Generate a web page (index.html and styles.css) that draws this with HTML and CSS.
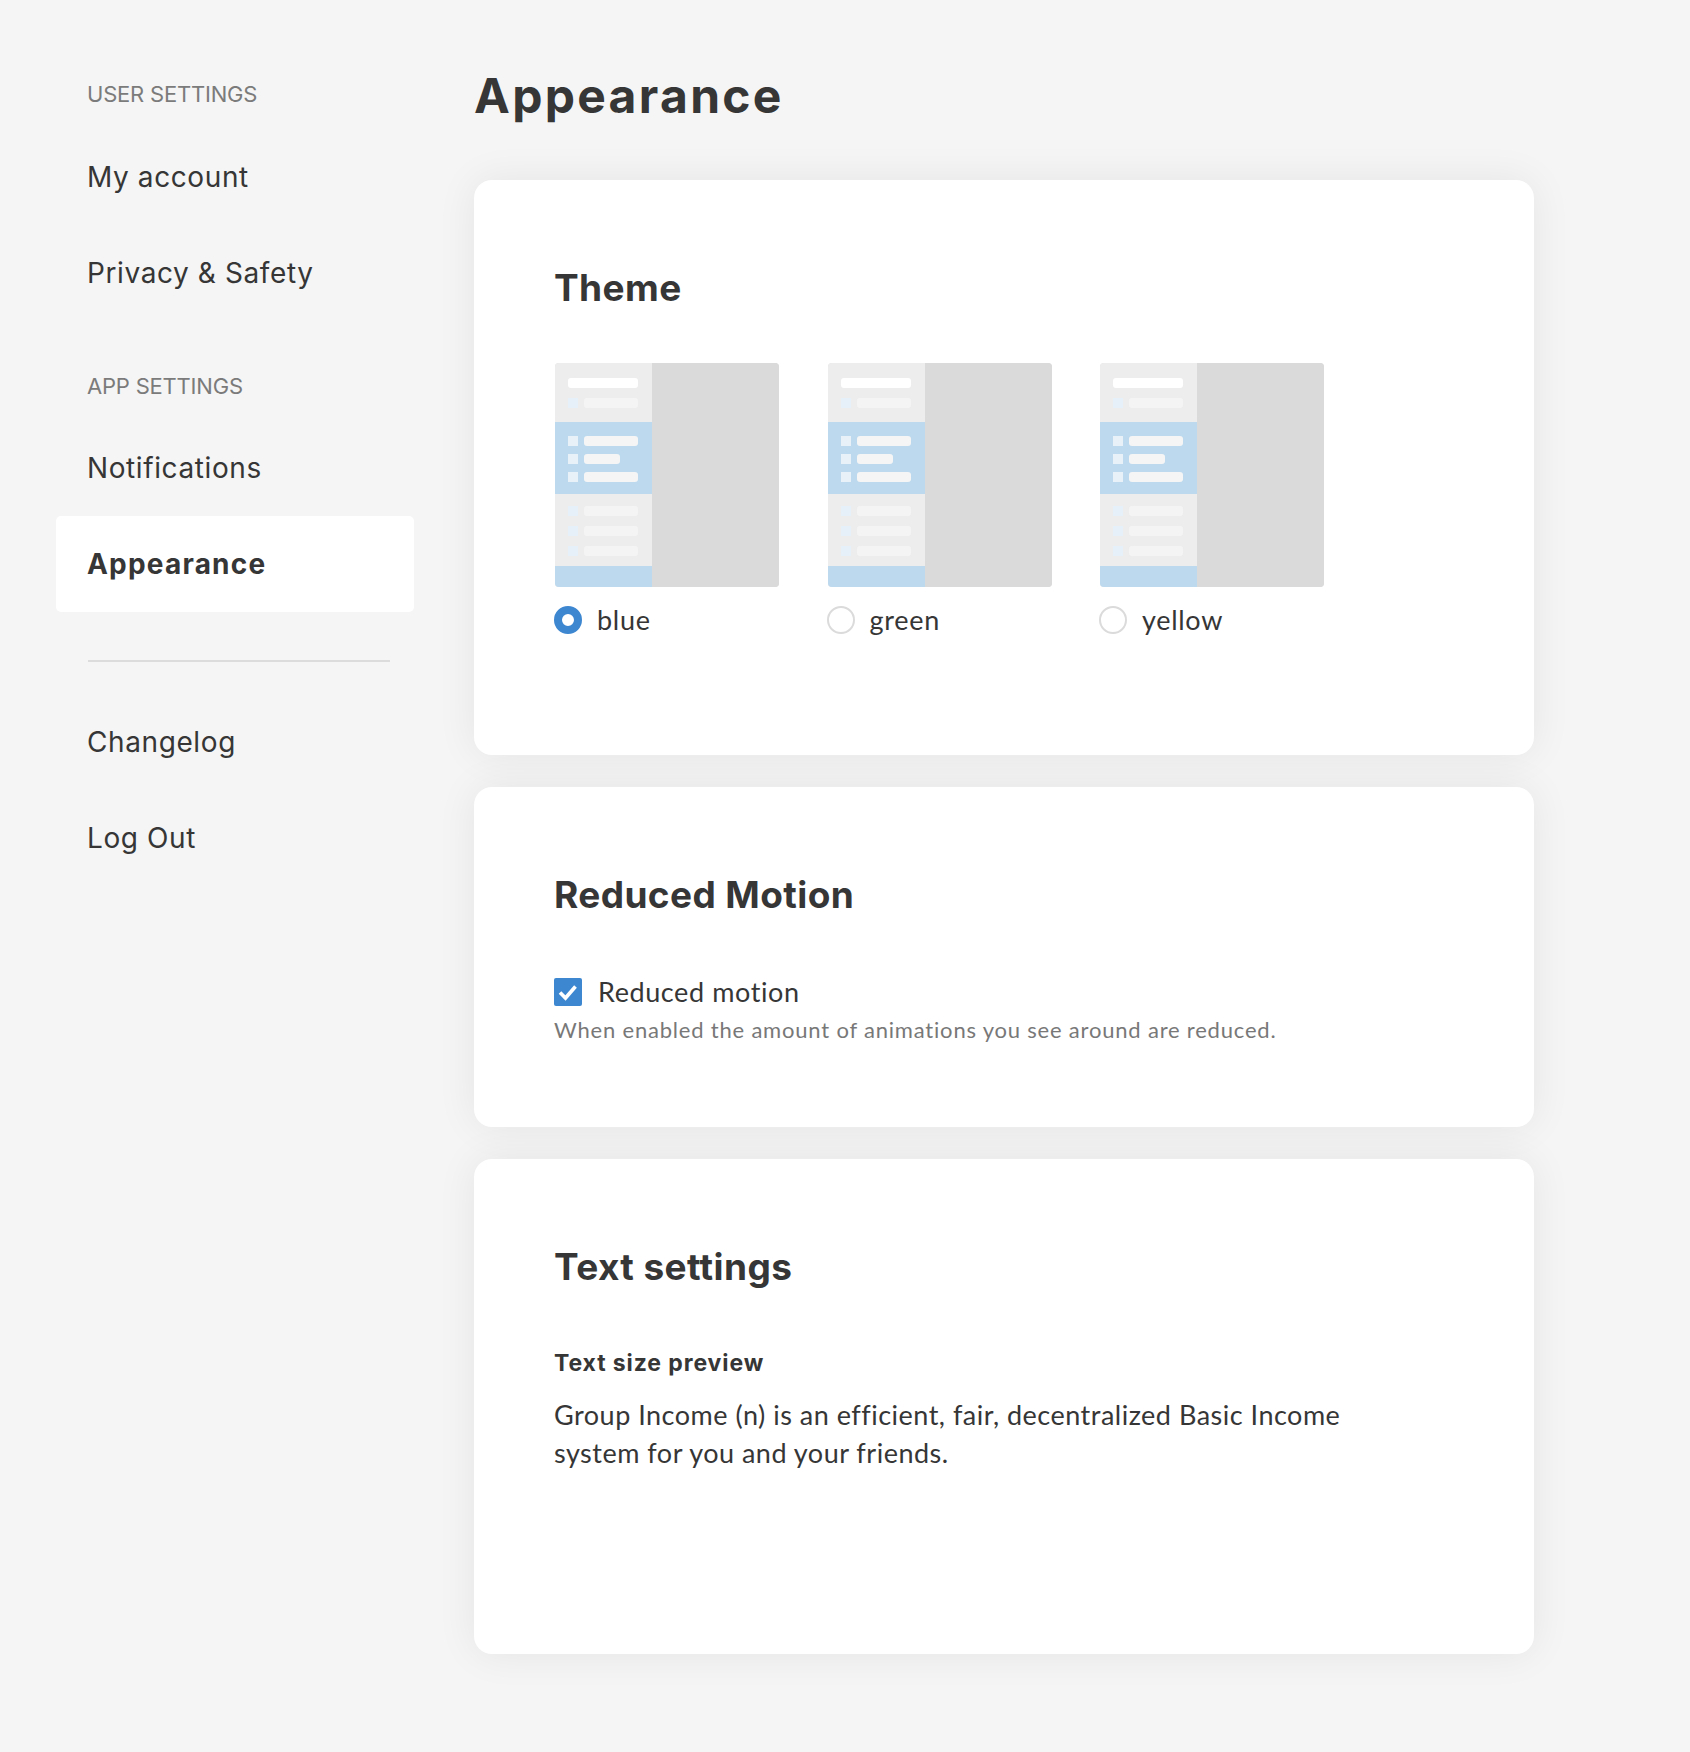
FILE: index.html
```html
<!DOCTYPE html>
<html lang="en">
<head>
    <meta charset="UTF-8">
    <meta name="viewport" content="width=device-width, initial-scale=1.0">
    <title>Appearance - Settings</title>
    <link rel="stylesheet" href="styles.css">
</head>
<body>
    <div class="page">
        <nav class="sidebar">
            <h4 class="nav-label">USER SETTINGS</h4>
            <a class="nav-item" href="#">My account</a>
            <a class="nav-item" href="#">Privacy &amp; Safety</a>

            <h4 class="nav-label nav-label-next">APP SETTINGS</h4>
            <a class="nav-item" href="#">Notifications</a>
            <a class="nav-item active" href="#">Appearance</a>

            <hr class="nav-divider">

            <a class="nav-item" href="#">Changelog</a>
            <a class="nav-item" href="#">Log Out</a>
        </nav>

        <main class="content">
            <h1 class="page-title">Appearance</h1>

            <section class="card card-theme">
                <h2 class="card-title">Theme</h2>
                <div class="theme-list">
                    <label class="theme-option">
                        <div class="preview">
                            <div class="pv-nav">
                                <div class="pv-top">
                                    <span class="pv-title"></span>
                                    <div class="pv-row"><span class="pv-dot"></span><span class="pv-bar"></span></div>
                                </div>
                                <div class="pv-active">
                                    <div class="pv-row"><span class="pv-dot"></span><span class="pv-bar"></span></div>
                                    <div class="pv-row"><span class="pv-dot"></span><span class="pv-bar short"></span></div>
                                    <div class="pv-row"><span class="pv-dot"></span><span class="pv-bar"></span></div>
                                </div>
                                <div class="pv-list">
                                    <div class="pv-row"><span class="pv-dot"></span><span class="pv-bar"></span></div>
                                    <div class="pv-row"><span class="pv-dot"></span><span class="pv-bar"></span></div>
                                    <div class="pv-row"><span class="pv-dot"></span><span class="pv-bar"></span></div>
                                </div>
                                <div class="pv-foot"></div>
                            </div>
                            <div class="pv-main"></div>
                        </div>
                        <div class="radio-row">
                            <span class="radio checked"></span>
                            <span>blue</span>
                        </div>
                    </label>

                    <label class="theme-option">
                        <div class="preview">
                            <div class="pv-nav">
                                <div class="pv-top">
                                    <span class="pv-title"></span>
                                    <div class="pv-row"><span class="pv-dot"></span><span class="pv-bar"></span></div>
                                </div>
                                <div class="pv-active">
                                    <div class="pv-row"><span class="pv-dot"></span><span class="pv-bar"></span></div>
                                    <div class="pv-row"><span class="pv-dot"></span><span class="pv-bar short"></span></div>
                                    <div class="pv-row"><span class="pv-dot"></span><span class="pv-bar"></span></div>
                                </div>
                                <div class="pv-list">
                                    <div class="pv-row"><span class="pv-dot"></span><span class="pv-bar"></span></div>
                                    <div class="pv-row"><span class="pv-dot"></span><span class="pv-bar"></span></div>
                                    <div class="pv-row"><span class="pv-dot"></span><span class="pv-bar"></span></div>
                                </div>
                                <div class="pv-foot"></div>
                            </div>
                            <div class="pv-main"></div>
                        </div>
                        <div class="radio-row">
                            <span class="radio"></span>
                            <span>green</span>
                        </div>
                    </label>

                    <label class="theme-option">
                        <div class="preview">
                            <div class="pv-nav">
                                <div class="pv-top">
                                    <span class="pv-title"></span>
                                    <div class="pv-row"><span class="pv-dot"></span><span class="pv-bar"></span></div>
                                </div>
                                <div class="pv-active">
                                    <div class="pv-row"><span class="pv-dot"></span><span class="pv-bar"></span></div>
                                    <div class="pv-row"><span class="pv-dot"></span><span class="pv-bar short"></span></div>
                                    <div class="pv-row"><span class="pv-dot"></span><span class="pv-bar"></span></div>
                                </div>
                                <div class="pv-list">
                                    <div class="pv-row"><span class="pv-dot"></span><span class="pv-bar"></span></div>
                                    <div class="pv-row"><span class="pv-dot"></span><span class="pv-bar"></span></div>
                                    <div class="pv-row"><span class="pv-dot"></span><span class="pv-bar"></span></div>
                                </div>
                                <div class="pv-foot"></div>
                            </div>
                            <div class="pv-main"></div>
                        </div>
                        <div class="radio-row">
                            <span class="radio"></span>
                            <span>yellow</span>
                        </div>
                    </label>
                </div>
            </section>

            <section class="card card-motion">
                <h2 class="card-title">Reduced Motion</h2>
                <label class="check-row">
                    <svg class="checkbox" width="28" height="28" viewBox="0 0 28 28">
                        <rect width="28" height="28" rx="2" fill="#3d87d1"/>
                        <polyline points="6,14.5 11.5,20 21.5,8.5" fill="none" stroke="#fff" stroke-width="3.6"/>
                    </svg>
                    <span>Reduced motion</span>
                </label>
                <p class="hint">When enabled the amount of animations you see around are reduced.</p>
            </section>

            <section class="card card-text">
                <h2 class="card-title">Text settings</h2>
                <h3 class="sub-title">Text size preview</h3>
                <p class="preview-text">Group Income (n) is an efficient, fair, decentralized Basic Income system for you and your friends.</p>
            </section>
        </main>
    </div>
</body>
</html>
```

FILE: styles.css
```css
body {
    margin: 0;
    background-color: #f5f5f5;
    color: #363636;
    font-family: "Lato", sans-serif;
}
.page {
    display: flex;
    gap: 60px;
    padding-left: 56px;
}

/* sidebar */
.sidebar {
    width: 358px;
    flex-shrink: 0;
    padding-top: 78px;
    display: flex;
    flex-direction: column;
}
.nav-label {
    margin: 0 0 19px;
    padding-left: 31px;
    font-family: "Inter", sans-serif;
    font-size: 22px;
    line-height: 32px;
    font-weight: 400;
    letter-spacing: -0.2px;
    color: #7b7b7b;
}
.nav-label-next {
    margin-top: 49px;
    margin-bottom: 18px;
}
.nav-item {
    display: block;
    height: 96px;
    line-height: 96px;
    padding-left: 31px;
    font-family: "Inter", sans-serif;
    font-size: 28px;
    letter-spacing: 0.6px;
    color: #363636;
    text-decoration: none;
    border-radius: 5px;
}
.nav-item.active {
    background-color: #fff;
    font-weight: 700;
    letter-spacing: 1.2px;
}
.nav-divider {
    width: 302px;
    height: 2px;
    margin: 48px 0 32px 32px;
    border: none;
    background-color: #dcdcdc;
}

/* main column */
.content {
    width: 1060px;
    padding-top: 68px;
    padding-bottom: 64px;
}
.page-title {
    margin: 0 0 56px;
    font-family: "Inter", sans-serif;
    font-size: 48px;
    line-height: 56px;
    font-weight: 700;
    letter-spacing: 2.3px;
}
.card {
    background-color: #fff;
    border-radius: 18px;
    padding: 86px 80px;
    margin-bottom: 32px;
    box-shadow: 0 0 40px rgba(0,0,0,0.07);
}
.card-title {
    margin: 0;
    font-family: "Inter", sans-serif;
    font-size: 37px;
    line-height: 44px;
    font-weight: 700;
    letter-spacing: 0.4px;
}

/* theme */
.card-theme {
    padding-bottom: 121px;
}
.theme-list {
    display: flex;
    gap: 47.5px;
    margin-top: 53px;
}
.theme-option {
    display: flex;
    flex-direction: column;
    gap: 19px;
    width: 225px;
    cursor: pointer;
}
.preview {
    display: flex;
    width: 224px;
    height: 224px;
    margin-left: 1px;
    border-radius: 4px;
    overflow: hidden;
    box-shadow: inset 0 0 0 1px #dedede;
}
.pv-nav {
    width: 97px;
    display: flex;
    flex-direction: column;
    background-color: #ededed;
}
.pv-main {
    flex: 1;
    background-color: #dadada;
}
.pv-top {
    height: 59px;
    box-sizing: border-box;
    padding: 15px 0 0 13px;
}
.pv-title {
    display: block;
    width: 70px;
    height: 10px;
    margin-bottom: 10px;
    border-radius: 3px;
    background-color: #fff;
}
.pv-active {
    height: 72px;
    box-sizing: border-box;
    padding: 14px 0 0 13px;
    display: flex;
    flex-direction: column;
    gap: 8px;
    background-color: #bcd9ee;
}
.pv-list {
    height: 72px;
    box-sizing: border-box;
    padding: 12px 0 0 13px;
    display: flex;
    flex-direction: column;
    gap: 10px;
}
.pv-foot {
    flex: 1;
    background-color: #bcd9ee;
}
.pv-row {
    display: flex;
    gap: 6px;
    height: 10px;
}
.pv-dot {
    width: 10px;
    height: 10px;
    background-color: #e6f0f8;
}
.pv-bar {
    width: 54px;
    height: 10px;
    border-radius: 3px;
    background-color: #f4f4f4;
}
.pv-bar.short {
    width: 36px;
}
.pv-active .pv-dot {
    background-color: #e9f1f8;
}
.pv-active .pv-bar {
    background-color: #f5f5f5;
}
.radio-row {
    display: flex;
    align-items: center;
    gap: 15px;
    height: 28px;
    font-size: 27px;
    line-height: 28px;
    letter-spacing: 0.7px;
}
.radio {
    width: 28px;
    height: 28px;
    box-sizing: border-box;
    border-radius: 50%;
    border: 2px solid #dbdbdb;
    background-color: #fff;
}
.radio.checked {
    border: 8.5px solid #3d87d1;
}

/* reduced motion */
.card-motion {
    padding-bottom: 83px;
}
.check-row {
    display: flex;
    align-items: center;
    gap: 16px;
    margin-top: 61px;
    height: 28px;
    font-size: 27px;
    line-height: 28px;
    letter-spacing: 0.6px;
    cursor: pointer;
}
.checkbox {
    display: block;
    flex-shrink: 0;
}
.hint {
    margin: 10px 0 0;
    font-size: 22px;
    line-height: 28px;
    letter-spacing: 0.8px;
    color: #787878;
}

/* text settings */
.card-text {
    padding-bottom: 182px;
}
.sub-title {
    margin: 60px 0 0;
    font-family: "Inter", sans-serif;
    font-size: 23px;
    line-height: 28px;
    font-weight: 700;
    letter-spacing: 0.9px;
}
.preview-text {
    max-width: 820px;
    margin: 19px 0 0;
    font-size: 27px;
    line-height: 38px;
    letter-spacing: 0.5px;
}
```
